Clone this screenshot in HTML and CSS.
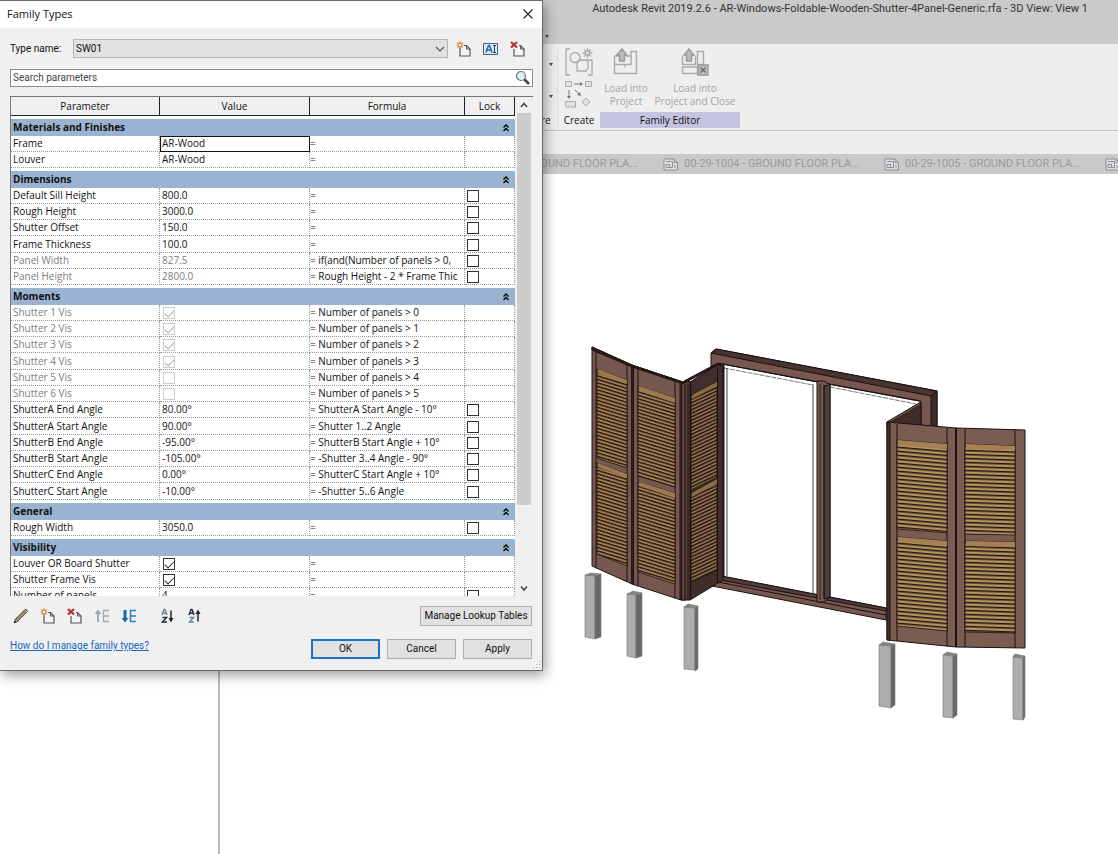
FILE: index.html
```html
<!DOCTYPE html>
<html lang="en">
<head>
<meta charset="utf-8">
<title>Autodesk Revit 2019.2.6</title>
<link rel="stylesheet" href="styles.css">
</head>
<body>
<svg class="defs" aria-hidden="true">
  <symbol id="i-new" viewBox="0 0 16 16"><path d="M4 7v8h10V8l-3.500-3.500H8" fill="#f4f4f4" stroke="#555" stroke-width="1.200"/><path d="M10.500 4.500V8H14" fill="none" stroke="#555"/><path d="M4 .5v7M.5 4h7M1.500 1.500l5 5M6.500 1.500l-5 5" stroke="#d9782d" stroke-width="1.200"/><circle cx="4" cy="4" r="1.300" fill="#fff"/></symbol>
  <symbol id="i-del" viewBox="0 0 16 16"><path d="M4 8v7h10V8l-3.500-3.500H9" fill="#f4f4f4" stroke="#555" stroke-width="1.200"/><path d="M10.500 4.500V8H14" fill="none" stroke="#555"/><path d="M1 1l6 5.500M7 1L1 6.500" stroke="#b5302c" stroke-width="2.200"/></symbol>
  <symbol id="i-sheet" viewBox="0 0 16 13"><path d="M1 1h10l3.500 3.500V12H1z" fill="#ddd" stroke="#8a8f98"/><path d="M11 1v3.500h3.500M3 3.500h6.500V9.500H6.500M3 6.500h3.500v3H3zM12 7v3" fill="none" stroke="#8a8f98"/></symbol>
  <symbol id="i-up2" viewBox="0 0 8 8"><path d="M1.500 3.500L4 1l2.500 2.500M1.500 7L4 4.500 6.500 7" fill="none" stroke="#000" stroke-width="1.300"/></symbol>
</svg>

<div class="app">
  <header class="titlebar"><h1>Autodesk Revit 2019.2.6 - AR-Windows-Foldable-Wooden-Shutter-4Panel-Generic.rfa - 3D View: View 1</h1><span class="caret"></span></header>
  <nav class="ribbon">
    <section class="group structure"><div class="tools carets"><span class="caret"></span><span class="caret"></span></div><h2>re</h2></section>
    <section class="group create">
      <div class="tools">
        <svg width="28" height="28" viewBox="0 0 28 28" fill="none" stroke="#aaa" stroke-width="1.300"><path d="M5 1H1v26h4M23 12h4v15h-4"/><circle cx="10" cy="9.500" r="5"/><path d="M12 15l3-3h7l1 2v6l-2 3h-9z" fill="#eee"/><path d="M22.500 0v10M17.500 5h10M19 1.500l7 7M26 1.500l-7 7"/><circle cx="22.500" cy="5" r="2" fill="#eee"/></svg>
        <svg width="28" height="28" viewBox="0 0 28 28" fill="none" stroke="#aaa"><path d="M.5 1.500h6v5h-6zM20.500 1.500h6v5h-6zM.5 21.500h10v5.500H.5z" fill="#e2e2e2"/><path d="M21 18l4 4-4 4-4-4z" fill="#e2e2e2"/><path d="M9 4h8M4 10v7M10 10l5 5" stroke="#777"/><path d="M18 4l-3-2v4zM4 19l-2-3h4zM16 16l-4-1 3-3z" fill="#777" stroke="none"/></svg>
      </div>
      <h2>Create</h2>
    </section>
    <section class="group editor">
      <div class="tools">
        <button type="button"><svg width="26" height="28" viewBox="0 0 26 28" fill="none" stroke="#aaa" stroke-width="1.400"><path d="M1.500 8v17.500h22V3.500H18v13H1.500M1.500 8h4M18 8h-5M12 16.500v3"/><path d="M9 1l5 6h-2.500v6h-5V7H3.500z" fill="#bbb" stroke="#999"/></svg><span>Load into<br>Project</span></button>
        <button type="button"><svg width="28" height="28" viewBox="0 0 28 28" fill="none" stroke="#aaa" stroke-width="1.400"><path d="M1.500 8v8.500h13V8M1.500 19v6.500h15V19zM16.500 3.500h6v13h-6z"/><path d="M8 1l5 6h-2.500v6h-5V7H3z" fill="#bbb" stroke="#999"/><path d="M17 17h10v10H17z" fill="#bbb" stroke="#999"/><path d="M19.500 19.500l5 5M24.500 19.500l-5 5" stroke="#666"/></svg><span>Load into<br>Project and Close</span></button>
      </div>
      <h2>Family Editor</h2>
    </section>
  </nav>
  <div class="options"></div>
  <div class="tabs">
    <div class="tab first"><span>GROUND FLOOR PLA...</span></div>
    <div class="tab"><svg width="16" height="13"><use href="#i-sheet"/></svg><span>00-29-1004 - GROUND FLOOR PLA...</span></div>
    <div class="tab"><svg width="16" height="13"><use href="#i-sheet"/></svg><span>00-29-1005 - GROUND FLOOR PLA...</span></div>
    <div class="tab"><svg width="16" height="13"><use href="#i-sheet"/></svg></div>
  </div>
  <main class="workspace">
    <aside class="browser"></aside>
    <div class="view">
      <svg class="model" width="460" height="390" viewBox="580 340 460 390" role="img" aria-label="Folding wooden shutter, 3D view">
        <defs>
          <pattern id="s1" width="40" height="3.500" patternUnits="userSpaceOnUse" patternTransform="skewY(17)"><rect width="40" height="3.500" fill="#a07d52"/><rect width="40" height="1.400" fill="#20140f"/></pattern>
          <pattern id="s3" width="40" height="3.500" patternUnits="userSpaceOnUse" patternTransform="skewY(-25)"><rect width="40" height="3.500" fill="#8d7049"/><rect width="40" height="1.500" fill="#20140f"/></pattern>
          <pattern id="s4" width="50" height="4" patternUnits="userSpaceOnUse" patternTransform="skewY(5)"><rect width="50" height="4" fill="#b39160"/><rect width="50" height="1.500" fill="#20140f"/></pattern>
          <pattern id="s5" width="50" height="4" patternUnits="userSpaceOnUse" patternTransform="skewY(2)"><rect width="50" height="4" fill="#b39160"/><rect width="50" height="1.500" fill="#20140f"/></pattern>
        </defs>
        <g stroke="#1b1110" stroke-linejoin="round">
          <!-- window frame -->
          <path d="M711 353l5-4 221 42v36h-16v-25L722 364l-11 3z" fill="#765850"/>
          <path d="M711 353l5-4 221 42-6 5z" fill="#4a3432"/>
          <path d="M931 396l6-5v36h-6z" fill="#3a2928"/>
          <path d="M722 365l199 37-12 6L724 371z" fill="#fff" stroke="none"/>
          <path d="M722 364l199 37" fill="none"/>
          <path d="M724 368l89 17M830 387l86 17" fill="none" stroke="#777" stroke-dasharray="5 1"/>
          <path d="M712 583l8-7 166 32v12L712 586z" fill="#765850"/>
          <path d="M722 576l164 32v3L720 580z" fill="#4d3c3a"/>
          <path d="M718 582l168 33" fill="none"/>
          <path d="M817 381h7l6 4v212l-6 5h-7z" fill="#765850"/>
          <path d="M824 386l6-1v212l-6 2z" fill="#4d403e"/>
          <path d="M820 384v216M824 385v214" fill="none" stroke-width=".8"/>
          <path d="M813 384v214M727 368v208" fill="none" stroke="#444"/>
          <path d="M717 363l7 1v213l-7 5z" fill="#453735"/><path d="M720 364v215" fill="none"/>
          <!-- left leaves -->
          <path d="M592 347l40 18v219l-40-18z" fill="#765850"/>
          <path d="M632 365l54 18v217l-5 0-49-16z" fill="#765850"/>
          <path d="M592 349l4 1v217M627 364v217M632 367v217M633.500 368v217M638 368v218M675 381v217M680 382v217" fill="none"/>
          <path d="M592 347l40 18 54 18-3 1-51-17-40-17z" fill="#2c1d1b"/>
          <g stroke-width=".8">
            <path d="M597 369l30 11v88l-30-10zM597 463l30 11v92l-30-12zM638 386l37 12v89l-37-11zM638 482l37 11v91l-37-12z" fill="url(#s1)"/>
            <path d="M598 369l29 11v4l-29-11zM598 463l29 11v4l-29-11zM639 386l36 12v5l-36-12zM639 482l36 11v5l-36-12z" fill="#9c7a50" stroke="none"/>
          </g>
          <path d="M690 382l28-18 5 2v214l-33 20z" fill="#412d2c"/>
          <path d="M681 384l9-3v219h-9z" fill="#5d433d"/><path d="M681.500 384v216M685 384v216M688 384v216M690.500 384v216M717.500 368v215" fill="none"/>
          <path d="M684 383l36-19-4 0-32 17z" fill="#2c1d1b"/>
          <g stroke-width=".8"><path d="M691 395l26-13v95l-26 13zM691 493l26-14v91l-26 13z" fill="url(#s3)"/><path d="M692 395l25-13v4l-25 13zM692 493l25-14v4l-25 14z" fill="#8b6c47" stroke="none"/></g>
          <!-- right leaves -->
          <path d="M887 422l34-20v25h-34z" fill="#3e2c2b"/><path d="M887 422l34-20-1 3-29 17z" fill="#6d5550" stroke-width=".6"/>
          <path d="M887 422l69 6v219l-69-7z" fill="#7a5c53"/>
          <path d="M956 428l69 2v218l-69-1z" fill="#7a5c53"/>
          <path d="M887 422l3 1v217h-3z" fill="#443230"/>
          <path d="M897 424v217M947 428v218M965 429v218M1015 430v218" fill="none"/>
          <path d="M956 428v219" stroke-width="2"/>
          <g stroke-width=".8">
            <path d="M897 440l50 4v89l-50-4zM897 537l50 4v90l-50-5z" fill="url(#s4)"/>
            <path d="M965 444l50 2v89l-50-1zM965 541l50 1v91l-50-1z" fill="url(#s5)"/>
            <path d="M898 440l49 4v5l-49-4zM898 537l49 4v5l-49-4zM966 444l49 2v4l-49-1zM966 541l49 1v5l-49-1z" fill="#a38155" stroke="none"/>
          </g>
        </g>
        <!-- posts -->
        <g stroke="#777" stroke-width=".6">
          <path d="M585 575l10 1v63l-10-2zM627 594l9 1v63l-9-2zM684 607l11 1v62l-11-1zM879 645l12 1v62l-12-2zM943 655l10 1v62l-10-1zM1013 657l10 1v62l-10-1z" fill="#adadad"/>
          <path d="M595 576l6-2v63l-6 2zM636 595l6-2v63l-6 2zM695 608l3-2v63l-3 2zM891 646l4-2v61l-4 3zM953 656l4-2v61l-4 3zM1023 658l2-2v61l-2 3z" fill="#686868"/>
          <path d="M585 575l6-2 10 1-6 2zM627 594l6-3 9 2-6 2zM684 607l4-3 10 2-3 2zM879 645l4-3 12 2-4 2zM943 655l4-3 10 2-4 2zM1013 657l2-3 10 2-2 2z" fill="#858585"/>
        </g>
      </svg>
    </div>
  </main>
</div>

<form class="dialog" role="dialog" aria-labelledby="dlg-title">
  <div class="dlg-head"><h2 id="dlg-title">Family Types</h2><button class="plain" type="button" aria-label="Close"><svg width="12" height="12" viewBox="0 0 12 12"><path d="M1.500 1.500l9 9M10.500 1.500l-9 9" stroke="#222" stroke-width="1.100"/></svg></button></div>
  <div class="dlg-body">
    <div class="type-row">
      <label for="type">Type name:</label>
      <div class="pick"><select id="type"><option>SW01</option></select><svg width="10" height="6" viewBox="0 0 10 6"><path d="M1 1l4 4 4-4" fill="none" stroke="#555" stroke-width="1.200"/></svg></div>
      <div class="type-tools">
        <button class="plain" type="button" aria-label="New type"><svg width="16" height="16"><use href="#i-new"/></svg></button>
        <button class="plain" type="button" aria-label="Rename type"><svg width="16" height="14" viewBox="0 0 16 14"><path d="M.500 1.500h14v11H.500z" fill="#d9ebf8" stroke="#46617c"/><path d="M3 10.500l2.500-7h1l2.500 7M4 8h4" fill="none" stroke="#1d70b8" stroke-width="1.600"/><path d="M10 3.500h3M10 10.500h3M11.500 3.500v7" stroke="#333"/></svg></button>
        <button class="plain" type="button" aria-label="Delete type"><svg width="16" height="16"><use href="#i-del"/></svg></button>
      </div>
    </div>
    <div class="search"><input type="text" placeholder="Search parameters" aria-label="Search parameters"><svg width="16" height="16" viewBox="0 0 16 16"><path d="M9 9l5 5" stroke="#444" stroke-width="2.600"/><circle cx="6" cy="6" r="4.500" fill="#dff0f5" stroke="#68777d" stroke-width="1.200"/></svg></div>

    <div class="grid">
      <div class="rows">
      <table>
        <colgroup><col class="c-name"><col class="c-value"><col class="c-formula"><col class="c-lock"></colgroup>
        <thead><tr><th>Parameter</th><th>Value</th><th>Formula</th><th>Lock</th></tr></thead>
        <tbody>
          <tr class="band"><th colspan="4"><div>Materials and Finishes<svg width="8" height="8"><use href="#i-up2"/></svg></div></th></tr>
          <tr><td>Frame</td><td class="focus">AR-Wood</td><td>=</td><td></td></tr>
          <tr><td>Louver</td><td>AR-Wood</td><td>=</td><td></td></tr>
        </tbody>
        <tbody>
          <tr class="band"><th colspan="4"><div>Dimensions<svg width="8" height="8"><use href="#i-up2"/></svg></div></th></tr>
          <tr><td>Default Sill Height</td><td>800.0</td><td>=</td><td><input type="checkbox" aria-label="Lock Default Sill Height"></td></tr>
          <tr><td>Rough Height</td><td>3000.0</td><td>=</td><td><input type="checkbox" aria-label="Lock Rough Height"></td></tr>
          <tr><td>Shutter Offset</td><td>150.0</td><td>=</td><td><input type="checkbox" aria-label="Lock Shutter Offset"></td></tr>
          <tr><td>Frame Thickness</td><td>100.0</td><td>=</td><td><input type="checkbox" aria-label="Lock Frame Thickness"></td></tr>
          <tr class="dim"><td>Panel Width</td><td>827.5</td><td>= if(and(Number of panels &gt; 0,</td><td><input type="checkbox" aria-label="Lock Panel Width"></td></tr>
          <tr class="dim"><td>Panel Height</td><td>2800.0</td><td>= Rough Height - 2 * Frame Thic</td><td><input type="checkbox" aria-label="Lock Panel Height"></td></tr>
        </tbody>
        <tbody>
          <tr class="band"><th colspan="4"><div>Moments<svg width="8" height="8"><use href="#i-up2"/></svg></div></th></tr>
          <tr class="dim"><td>Shutter 1 Vis</td><td><input type="checkbox" checked disabled aria-label="Shutter 1 Vis"></td><td>= Number of panels &gt; 0</td><td></td></tr>
          <tr class="dim"><td>Shutter 2 Vis</td><td><input type="checkbox" checked disabled aria-label="Shutter 2 Vis"></td><td>= Number of panels &gt; 1</td><td></td></tr>
          <tr class="dim"><td>Shutter 3 Vis</td><td><input type="checkbox" checked disabled aria-label="Shutter 3 Vis"></td><td>= Number of panels &gt; 2</td><td></td></tr>
          <tr class="dim"><td>Shutter 4 Vis</td><td><input type="checkbox" checked disabled aria-label="Shutter 4 Vis"></td><td>= Number of panels &gt; 3</td><td></td></tr>
          <tr class="dim"><td>Shutter 5 Vis</td><td><input type="checkbox" disabled aria-label="Shutter 5 Vis"></td><td>= Number of panels &gt; 4</td><td></td></tr>
          <tr class="dim"><td>Shutter 6 Vis</td><td><input type="checkbox" disabled aria-label="Shutter 6 Vis"></td><td>= Number of panels &gt; 5</td><td></td></tr>
          <tr><td>ShutterA End Angle</td><td>80.00°</td><td>= ShutterA Start Angle - 10°</td><td><input type="checkbox" aria-label="Lock ShutterA End Angle"></td></tr>
          <tr><td>ShutterA Start Angle</td><td>90.00°</td><td>= Shutter 1..2 Angle</td><td><input type="checkbox" aria-label="Lock ShutterA Start Angle"></td></tr>
          <tr><td>ShutterB End Angle</td><td>-95.00°</td><td>= ShutterB Start Angle + 10°</td><td><input type="checkbox" aria-label="Lock ShutterB End Angle"></td></tr>
          <tr><td>ShutterB Start Angle</td><td>-105.00°</td><td>= -Shutter 3..4 Angle - 90°</td><td><input type="checkbox" aria-label="Lock ShutterB Start Angle"></td></tr>
          <tr><td>ShutterC End Angle</td><td>0.00°</td><td>= ShutterC Start Angle + 10°</td><td><input type="checkbox" aria-label="Lock ShutterC End Angle"></td></tr>
          <tr><td>ShutterC Start Angle</td><td>-10.00°</td><td>= -Shutter 5..6 Angle</td><td><input type="checkbox" aria-label="Lock ShutterC Start Angle"></td></tr>
        </tbody>
        <tbody>
          <tr class="band"><th colspan="4"><div>General<svg width="8" height="8"><use href="#i-up2"/></svg></div></th></tr>
          <tr><td>Rough Width</td><td>3050.0</td><td>=</td><td><input type="checkbox" aria-label="Lock Rough Width"></td></tr>
        </tbody>
        <tbody>
          <tr class="band"><th colspan="4"><div>Visibility<svg width="8" height="8"><use href="#i-up2"/></svg></div></th></tr>
          <tr><td>Louver OR Board Shutter</td><td><input type="checkbox" checked aria-label="Louver OR Board Shutter"></td><td>=</td><td></td></tr>
          <tr><td>Shutter Frame Vis</td><td><input type="checkbox" checked aria-label="Shutter Frame Vis"></td><td>=</td><td></td></tr>
          <tr><td>Number of panels</td><td>4</td><td>=</td><td><input type="checkbox" aria-label="Lock Number of panels"></td></tr>
        </tbody>
      </table>
      </div>
      <div class="scroll"><svg width="14" height="16" viewBox="0 0 14 16"><path d="M4 10l3-3.500 3 3.500" fill="none" stroke="#444" stroke-width="1.600"/></svg><div class="track"><div class="thumb"></div></div><svg width="14" height="16" viewBox="0 0 14 16"><path d="M4 6.500l3 3.500 3-3.500" fill="none" stroke="#444" stroke-width="1.600"/></svg></div>
    </div>

    <div class="tool-row">
      <button class="plain" type="button" aria-label="Edit parameter"><svg width="16" height="16" viewBox="0 0 16 16"><path d="M1 15l1.500-4L12 1.500q2-.5 2.500 2L5 13z" fill="#d8b98c" stroke="#4d4238"/><path d="M3 11l8.500-8.500 2 2L5 13z" fill="#a58c6c" stroke="#554" stroke-width=".6"/><path d="M1 15l1-2.500 1.500 1.500z" fill="#222"/></svg></button>
      <button class="plain" type="button" aria-label="New parameter"><svg width="16" height="16"><use href="#i-new"/></svg></button>
      <button class="plain" type="button" aria-label="Delete parameter"><svg width="16" height="16"><use href="#i-del"/></svg></button>
      <button class="plain" type="button" aria-label="Move up"><svg width="16" height="16" viewBox="0 0 16 16"><path d="M4 1.500l3.500 4.500H5v8H3V6H.500z" fill="#98a9ba"/><path d="M15 2.500H9.500v11H15M9.500 8H15" fill="none" stroke="#98a9ba" stroke-width="1.300"/></svg></button>
      <button class="plain" type="button" aria-label="Move down"><svg width="16" height="16" viewBox="0 0 16 16"><path d="M4 14.500L.500 10h2V2h3v8h2z" fill="#1768ad"/><path d="M15 2.500H9.500v11H15M9.500 8H15" fill="none" stroke="#2f7fbd" stroke-width="1.500"/></svg></button>
      <button class="plain sort" type="button" aria-label="Sort ascending"><svg width="16" height="16" viewBox="0 0 16 16" fill="none" stroke-width="1.500"><path d="M2 7l2-5.500h1L7 7M3 5.300h3" stroke="#6d84a6"/><path d="M2.500 9.500h4l-4 4.500h4.500" stroke="#1f2f4d"/><path d="M11 2.500V12" stroke="#222"/><path d="M11 14.500L8.500 10h5z" fill="#222"/></svg></button>
      <button class="plain" type="button" aria-label="Sort descending"><svg width="16" height="16" viewBox="0 0 16 16" fill="none" stroke-width="1.500"><path d="M2 7l2-5.500h1L7 7M3 5.300h3" stroke="#1f2f4d"/><path d="M2.500 9.500h4l-4 4.500h4.500" stroke="#6d84a6"/><path d="M11 4v9.500" stroke="#222"/><path d="M11 1.500L8.500 6h5z" fill="#222"/></svg></button>
      <button class="btn wide" type="button">Manage Lookup Tables</button>
    </div>
    <div class="foot">
      <a href="#help">How do I manage family types?</a>
      <div class="actions"><button class="btn primary" type="button">OK</button><button class="btn" type="button">Cancel</button><button class="btn" type="button">Apply</button></div>
    </div>
  </div>
  <svg class="grip" width="9" height="9" viewBox="0 0 9 9" fill="#aaa"><path d="M7 1h1v1H7zM4 4h1v1H4zM7 4h1v1H7zM1 7h1v1H1zM4 7h1v1H4zM7 7h1v1H7z"/></svg>
</form>
</body>
</html>
```

FILE: styles.css
```css
* { box-sizing: border-box; }
body { margin: 0; font: 10px/16px "Open Sans", "Noto Sans", sans-serif; color: #111; background: #fff; }
h1, h2 { margin: 0; font-size: 10px; font-weight: 400; }
button, input, select { font: inherit; color: inherit; }
svg { display: block; flex: none; }
.defs { display: none; }

.app { display: flex; flex-direction: column; min-height: 100vh; overflow: hidden; }
.titlebar { display: flex; flex-direction: column; justify-content: space-between; height: 44px; padding: 0 30px 6px 545px; background: #cacaca; }
.titlebar h1 { align-self: flex-end; padding-top: 1px; font: 11px/16px Roboto, "Open Sans", sans-serif; white-space: nowrap; color: #333; }
.caret { width: 0; border: 2px solid transparent; border-top: 3px solid #444; border-bottom: 0; }

.ribbon { display: flex; height: 87px; padding: 4px 0 2px 541px; background: #eee; border-bottom: 1px solid #c4c4c4; }
.group { display: flex; flex-direction: column; }
.group h2 { height: 16px; text-align: center; }
.tools { display: flex; flex: 1; }
.structure { width: 17px; border-right: 1px solid #ddd; }
.structure h2 { text-align: left; }
.carets { flex-direction: column; justify-content: space-around; align-items: flex-end; padding: 0 4px; }
.create { width: 42px; }
.create .tools { flex-direction: column; align-items: center; gap: 4px; }
.editor { width: 140px; }
.editor h2 { background: #c4c4e0; }
.editor button { display: flex; flex-direction: column; align-items: center; gap: 6px; padding: 0; border: 0; background: none; color: #a3a3a3; line-height: 13px; white-space: nowrap; }
.editor button:first-child { width: 52px; }
.editor button:last-child { width: 86px; }
.options { height: 23px; background: #eee; }

.tabs { display: flex; height: 20px; padding-left: 441px; background: #c9c9c9; color: #999; overflow: hidden; }
.tab { display: flex; align-items: center; flex: none; gap: 5px; width: 221px; padding-left: 1px; font: 11px/16px Roboto, "Open Sans", sans-serif; white-space: nowrap; }
.first { justify-content: flex-end; padding-right: 24px; }
.workspace { display: flex; flex: 1; }
.browser { width: 220px; border-right: 2px solid #bbb; }
.view { flex: 1; padding: 166px 0 0 360px; }

.dialog { position: absolute; top: 0; left: 0; width: 543px; background: #f0f0f0; border: solid #6b6b6b; border-width: 1px 1px 1px 0; box-shadow: 2px 4px 12px #0006; }
.dlg-head { display: flex; justify-content: space-between; align-items: center; height: 27px; padding: 0 8px 2px 7px; background: #fff; }
.dlg-head h2 { font-size: 11px; }
.plain { padding: 0; border: 0; background: none; }
.dlg-body { padding: 11px 9px 11px 10px; }
.type-row, .search, .btn, .foot { font-family: Roboto, "Open Sans", sans-serif; }

.type-row { display: flex; align-items: center; height: 19px; }
.type-row label { width: 63px; }
.pick { display: grid; flex: 1; align-items: center; }
.pick > * { grid-area: 1 / 1; }
.pick svg { justify-self: end; margin-right: 3px; }
select { appearance: none; width: 100%; height: 19px; padding: 0 2px; border: 1px solid #b5b5b5; border-radius: 0; background: #e1e1e1; }
.type-tools { display: flex; gap: 11px; padding: 0 7px 0 8px; }
.search { display: flex; align-items: center; height: 18px; margin-top: 11px; padding-right: 1px; border: 1px solid #8c8c8c; background: #fff; }
.search input { flex: 1; height: 16px; padding: 0 2px; border: 0; outline: 0; background: none; }
.search input::placeholder { color: #444; opacity: 1; }

.grid { display: flex; gap: 2px; height: 500px; margin-top: 9px; border: solid #777; border-width: 1px 0 0 1px; overflow: hidden; }
.rows { flex: 1; overflow: hidden; background: #fff; }
table { width: 100%; table-layout: fixed; border-spacing: 0; }
.c-name { width: 149px; }
.c-value { width: 150px; }
.c-formula { width: 155px; }
thead th { height: 19px; padding: 0; border: solid #222; border-width: 0 1px 1px 0; background: #f0f0f0; font-weight: 400; }
td { height: 16px; padding: 0 2px; border: dotted #999; border-width: 0 1px 1px 0; line-height: 15px; white-space: nowrap; overflow: hidden; }
td:nth-child(3) { padding: 0; }
tbody tr:nth-child(4n + 1) td { height: 17px; }
.band th { height: 20px; padding: 0; border-top: 3px solid #fff; background: #9ab3d1; text-align: left; line-height: 17px; }
.band div { display: flex; align-items: center; justify-content: space-between; padding: 0 5px 0 2px; }
.dim td { color: #808080; }
.dim td:nth-child(3) { color: #111; }
.focus { outline: 1px solid #111; outline-offset: -1px; }
input[type="checkbox"] { appearance: none; display: grid; width: 12px; height: 12px; margin: 1px 0 0 1px; border: 1px solid #333; background: #fff; }
td:last-child input[type="checkbox"] { margin-left: 0; }
input[type="checkbox"]:checked::after { content: ""; width: 8px; height: 4px; margin: 2px 0 0 1px; border: solid #333; border-width: 0 0 1px 1px; transform: rotate(-45deg); }
input[type="checkbox"]:disabled { border-color: #ccc; }
input[type="checkbox"]:disabled::after { border-color: #aaa; }
.scroll { display: flex; flex-direction: column; width: 14px; margin-right: 2px; }
.track { flex: 1; }
.thumb { height: 84%; background: #cdcdcd; }

.tool-row { display: flex; align-items: center; gap: 11px; margin-top: 10px; padding-left: 3px; }
.sort { margin-left: 12px; }
.btn { width: 69px; height: 20px; padding: 0; border: 1px solid #adadad; background: #e1e1e1; }
.wide { width: 112px; margin: 0 1px 0 auto; }
.primary { border: 2px solid #1874c6; }
.foot { display: flex; justify-content: space-between; margin-top: 12px; }
.foot a { color: #1667c0; }
.actions { display: flex; gap: 7px; padding: 1px 1px 0 0; }
.grip { position: absolute; right: 1px; bottom: 1px; }
```
